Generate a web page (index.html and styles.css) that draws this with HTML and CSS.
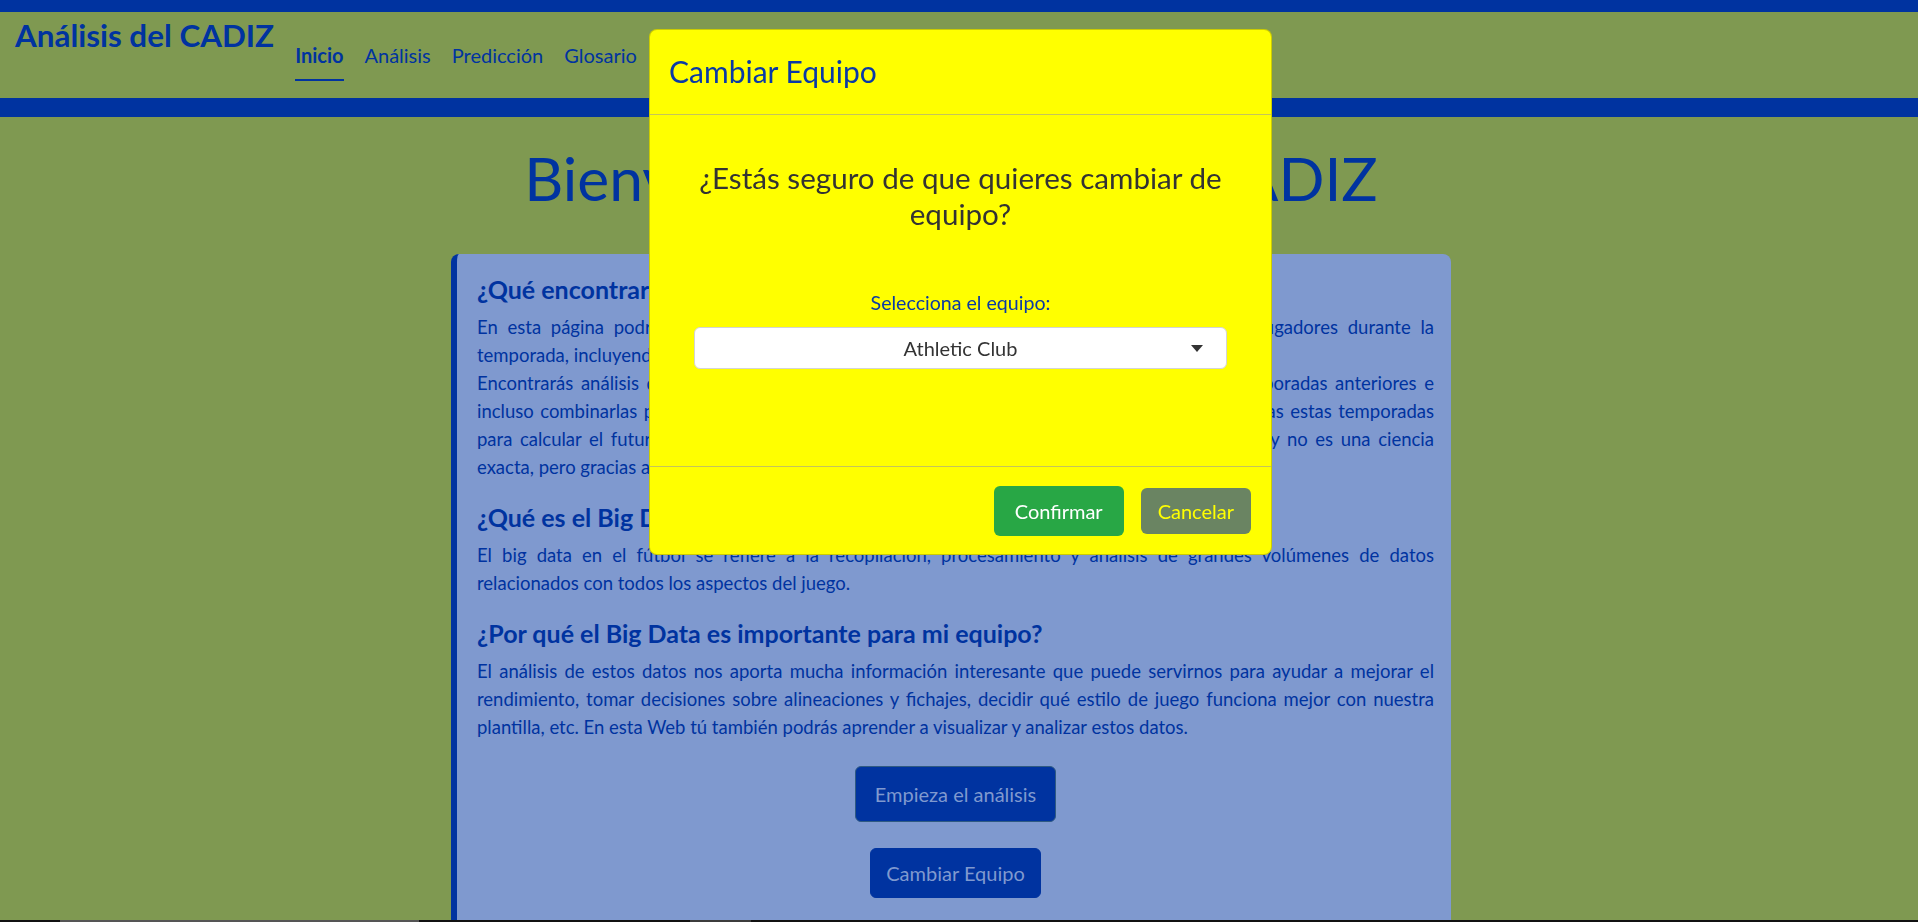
FILE: index.html
```html
<!DOCTYPE html>
<html lang="es">
<head>
<meta charset="utf-8">
<title>Análisis del CADIZ</title>
<link rel="stylesheet" href="styles.css">
</head>
<body>
<div class="topbar"></div>
<header class="site-header">
  <div class="brand">Análisis del CADIZ</div>
  <nav class="nav">
    <a class="active" href="#">Inicio</a>
    <a href="#">Análisis</a>
    <a href="#">Predicción</a>
    <a href="#">Glosario</a>
  </nav>
</header>
<div class="subbar"></div>

<main class="main">
  <h1 class="welcome">Bienvenido al análisis del CADIZ</h1>
  <section class="card">
    <h2>¿Qué encontrarás en esta página?</h2>
    <p>En esta página podrás ver estadísticas y datos sobre el rendimiento del equipo y de sus jugadores durante la temporada, incluyendo goles, asistencias, tarjetas y mucho más.<br>Encontrarás análisis de los partidos de la temporada actual, así como comparaciones con temporadas anteriores e incluso combinarlas para obtener una visión más completa. Además, utilizamos los datos de todas estas temporadas para calcular el futuro rendimiento del equipo. Debes tener en cuenta que es una estimación y no es una ciencia exacta, pero gracias a ella podemos anticipar lo que puede pasar.</p>
    <h2>¿Qué es el Big Data?</h2>
    <p>El big data en el fútbol se refiere a la recopilación, procesamiento y análisis de grandes volúmenes de datos relacionados con todos los aspectos del juego.</p>
    <h2>¿Por qué el Big Data es importante para mi equipo?</h2>
    <p>El análisis de estos datos nos aporta mucha información interesante que puede servirnos para ayudar a mejorar el rendimiento, tomar decisiones sobre alineaciones y fichajes, decidir qué estilo de juego funciona mejor con nuestra plantilla, etc. En esta Web tú también podrás aprender a visualizar y analizar estos datos.</p>
    <div class="actions">
      <a class="btn btn-lg" href="#">Empieza el análisis</a>
      <a class="btn btn-md" href="#">Cambiar Equipo</a>
    </div>
  </section>
</main>

<div class="modal-layer">
  <div class="modal">
    <div class="modal-header">
      <div class="modal-title">Cambiar Equipo</div>
    </div>
    <div class="modal-body">
      <div class="question">¿Estás seguro de que quieres cambiar de equipo?</div>
      <div class="label">Selecciona el equipo:</div>
      <div class="select">
        <span>Athletic Club</span>
        <svg class="caret" width="12" height="7" viewBox="0 0 12 7"><path d="M0 0 L12 0 L6 7 Z" fill="#333"/></svg>
      </div>
    </div>
    <div class="modal-footer">
      <a class="mbtn confirm" href="#">Confirmar</a>
      <a class="mbtn cancel" href="#">Cancelar</a>
    </div>
  </div>
</div>

<div class="hscroll">
  <div class="thumb thumb-a"></div>
  <div class="thumb thumb-b"></div>
</div>
</body>
</html>
```

FILE: styles.css
```css
* { box-sizing: border-box; }
html, body { margin: 0; padding: 0; }
body {
  background: #7f9951;
  font-family: Lato, "Open Sans", sans-serif;
  color: #0033a0;
  overflow: hidden;
  height: 922px;
}
.topbar { height: 12px; background: #0033a0; }
.site-header {
  height: 86px;
  display: flex;
  gap: 21px;
  padding-left: 15px;
  background: #7f9951;
}
.brand {
  font-size: 31.4px;
  font-weight: 700;
  line-height: 1.2;
  margin-top: 5px;
  color: #0033a0;
}
.nav { display: flex; gap: 21px; margin-top: 31px; }
.nav a {
  font-size: 20px;
  line-height: 1.2;
  padding-bottom: 12px;
  color: #0033a0;
  text-decoration: none;
  height: 38px;
}
.nav a.active { font-weight: 700; border-bottom: 2px solid #0033a0; }
.subbar { height: 19px; background: #0033a0; }

.main { padding-right: 16px; }
.welcome {
  margin: 25px 0 0;
  text-align: center;
  font-size: 60.5px;
  font-weight: 400;
  line-height: 1.2;
  color: #0033a0;
}
.card {
  width: 1000px;
  margin: 39px auto 0;
  background: #7f99cf;
  border-left: 6px solid #0033a0;
  border-radius: 8px;
  padding: 20px 17px 40px 20px;
}
.card h2 {
  font-size: 25px;
  font-weight: 700;
  line-height: 1.2;
  margin: 0 0 9px;
}
.card p {
  font-size: 18.5px;
  line-height: 28px;
  margin: 0 0 21px;
  text-align: justify;
}
.actions {
  display: flex;
  flex-direction: column;
  align-items: center;
  gap: 26px;
  margin-top: 25px;
}
.btn {
  display: inline-block;
  background: #0033a0;
  color: #7f99cf;
  text-decoration: none;
  font-size: 20px;
  line-height: 30px;
  border-radius: 6px;
  border: 1px solid #2f5a82;
}
.btn-lg { padding: 12px 19px; }
.btn-md { padding: 9px 15px; border-color: #0033a0; }

.modal-layer {
  position: fixed;
  inset: 0;
  display: flex;
  justify-content: center;
  align-items: flex-start;
  padding-top: 29px;
  padding-left: 3px;
}
.modal {
  width: 623px;
  background: #ffff00;
  border: 1px solid rgba(0,0,0,0.2);
  border-radius: 8px;
}
.modal-header {
  height: 85px;
  border-bottom: 1px solid #c4c45a;
  padding: 0 19px;
  display: flex;
  align-items: center;
}
.modal-title { font-size: 30px; line-height: 1.2; color: #0a3aa6; margin-top: -2px; }
.modal-body {
  height: 351px;
  padding: 45px 20px 0;
  display: flex;
  flex-direction: column;
  align-items: center;
}
.question {
  font-size: 29.6px;
  line-height: 1.2;
  text-align: center;
  color: #333;
  width: 560px;
}
.label {
  margin-top: 58px;
  font-size: 19.6px;
  line-height: 27px;
  color: #0a3aa6;
}
.select {
  margin-top: 11px;
  width: 533px;
  height: 42px;
  background: #fff;
  border: 1px solid #d4d4d4;
  border-radius: 6px;
  display: flex;
  align-items: center;
  justify-content: center;
  position: relative;
  font-size: 20px;
  color: #333;
}
.caret { position: absolute; right: 23px; top: 17px; }
.modal-footer {
  height: 88px;
  border-top: 1px solid #c4c45a;
  display: flex;
  justify-content: flex-end;
  align-items: center;
  gap: 17px;
  padding-right: 20px;
}
.mbtn {
  font-size: 20px;
  line-height: 30px;
  text-decoration: none;
  border-radius: 6px;
}
.confirm { background: #28a745; color: #fff; padding: 10px 21px; }
.cancel { background: #6a8462; color: #ffff00; padding: 8px 17px; }

.hscroll {
  position: fixed;
  left: 0; right: 0; bottom: 0;
  height: 2px;
  background: #111;
}
.thumb { position: absolute; top: 0; height: 2px; background: #555; }
.thumb-a { left: 60px; width: 359px; }
.thumb-b { left: 690px; width: 61px; background: #3c3c3c; }
```
